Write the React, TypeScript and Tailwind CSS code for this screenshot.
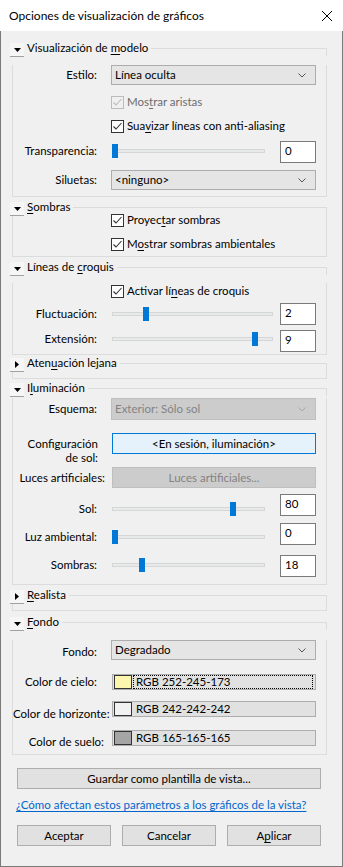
import React from "react";

const FONT = "font-['Lato',sans-serif]";

function U({ children }: { children: React.ReactNode }) {
  return <span className="underline underline-offset-[2px] decoration-[1px]">{children}</span>;
}

function Check({ disabled }: { disabled?: boolean }) {
  const c = disabled ? "#bcbcbc" : "#333333";
  return (
    <svg width="13" height="13" viewBox="0 0 13 13" className="shrink-0">
      <rect x="0.5" y="0.5" width="12" height="12" fill={disabled ? "#f0f0f0" : "#ffffff"} stroke={c} />
      <polyline points="2.5,6.5 5,9 10.5,3" fill="none" stroke={c} strokeWidth="1.1" />
    </svg>
  );
}

function CheckRow({ children, disabled, className }: { children: React.ReactNode; disabled?: boolean; className?: string }) {
  return (
    <div className={`flex items-center h-[16px] pl-[98px] ${className ?? ""}`}>
      <Check disabled={disabled} />
      <span className={`ml-[3px] leading-[16px] ${disabled ? "text-[#6d6d6d]" : "text-black"}`}>{children}</span>
    </div>
  );
}

function Chevron({ disabled }: { disabled?: boolean }) {
  return (
    <svg width="8" height="5" viewBox="0 0 8 5" className="shrink-0">
      <polyline points="0.5,0.5 4,4 7.5,0.5" fill="none" stroke={disabled ? "#a8a8a8" : "#555555"} strokeWidth="1" />
    </svg>
  );
}

function Select({ value, disabled, h = "h-[20px]" }: { value: string; disabled?: boolean; h?: string }) {
  return (
    <div
      className={`w-[205px] ${h} flex items-center justify-between pl-[3px] pr-[9px] border ${
        disabled ? "bg-[#cccccc] border-[#bfbfbf] text-[#838383]" : "bg-[#e5e5e5] border-[#adadad] text-black"
      }`}
    >
      <span className="leading-[16px]">{value}</span>
      <Chevron disabled={disabled} />
    </div>
  );
}

function Slider({ thumb, width }: { thumb: number; width: string }) {
  return (
    <div className="w-[169px] shrink-0 flex items-center">
      <div className={`relative ml-[1px] ${width} h-[4px] bg-[#e7eaea] border border-[#d6d6d6]`}>
        <div className="absolute top-[-6px] w-[6px] h-[14px] bg-[#0078d7]" style={{ left: thumb - 1 }} />
      </div>
    </div>
  );
}

function NumBox({ value }: { value: string }) {
  return (
    <div className="w-[36px] h-[22px] shrink-0 bg-white border border-[#7a7a7a] pl-[4px] leading-[18px]">{value}</div>
  );
}

function SliderRow({
  label,
  thumb,
  value,
  wide,
  className,
  shift,
}: {
  label: string;
  thumb: number;
  value: string;
  wide?: boolean;
  className?: string;
  shift?: string;
}) {
  return (
    <div className={`flex items-center h-[22px] ${className ?? ""}`}>
      <div className={`flex items-center ${shift ?? ""}`}>
        <div className="w-[98px] pr-[14px] text-right leading-[16px]">{label}</div>
        <Slider thumb={thumb} width={wide ? "w-[161px]" : "w-[153px]"} />
      </div>
      <NumBox value={value} />
    </div>
  );
}

function Triangle({ open }: { open: boolean }) {
  return open ? (
    <svg width="7" height="4" viewBox="0 0 7 4">
      <polygon points="0,0 7,0 3.5,4" fill="#000" />
    </svg>
  ) : (
    <svg width="4" height="7" viewBox="0 0 4 7">
      <polygon points="0,0 4,3.5 0,7" fill="#000" />
    </svg>
  );
}

function Group({
  title,
  open,
  className,
  bodyClass,
  children,
}: {
  title: React.ReactNode;
  open: boolean;
  className?: string;
  bodyClass?: string;
  children?: React.ReactNode;
}) {
  return (
    <div className={className}>
      <div className="flex items-start h-[16px]">
        <div className="relative z-10 w-[14px] h-[14px] mt-[3px] shrink-0 flex items-center justify-center bg-[#f6f6f6] border-b border-[#a0a0a0]">
          <Triangle open={open} />
        </div>
        <div className="ml-[3px] leading-[16px] whitespace-nowrap">{title}</div>
        <div className="flex-1 self-stretch ml-[3px] mt-[8px] border-t border-r border-[#dcdcdc]" />
      </div>
      <div className={`ml-[2px] border-l border-r border-b border-[#dcdcdc] ${bodyClass ?? ""}`}>{children}</div>
    </div>
  );
}

function Label({ children, pr = "pr-[14px]", className }: { children: React.ReactNode; pr?: string; className?: string }) {
  return <div className={`w-[98px] shrink-0 text-right leading-[16px] ${pr} ${className ?? ""}`}>{children}</div>;
}

function ColorField({ color, text, focus }: { color: string; text: string; focus?: boolean }) {
  return (
    <div className="w-[204px] h-[16px] shrink-0 flex items-center bg-[#e1e1e1] border border-[#adadad]">
      <div className={`ml-[1px] w-[18px] h-[14px] border border-[#333333] ${color}`} />
      <div
        className={`ml-[1px] mr-[2px] flex-1 h-[14px] pl-[2px] leading-[12px] border border-dotted ${
          focus ? "border-black" : "border-transparent"
        }`}
      >
        {text}
      </div>
    </div>
  );
}

function Btn({ children, className }: { children: React.ReactNode; className?: string }) {
  return (
    <div className={`h-[21px] flex items-center justify-center bg-[#e1e1e1] border border-[#adadad] leading-[16px] ${className ?? ""}`}>
      {children}
    </div>
  );
}

export default function App() {
  return (
    <div className={`w-[343px] h-[867px] flex flex-col bg-[#f0f0f0] text-[11.5px] text-black ${FONT}`}>
      {/* Title bar */}
      <div className="h-[31px] shrink-0 bg-white flex items-center justify-between pl-[9px] pr-[11px]">
        <span className="leading-[16px] text-[12px]">Opciones de visualización de gráficos</span>
        <svg width="10" height="10" viewBox="0 0 10 10">
          <line x1="0" y1="0" x2="10" y2="10" stroke="#000" strokeWidth="1" />
          <line x1="10" y1="0" x2="0" y2="10" stroke="#000" strokeWidth="1" />
        </svg>
      </div>

      {/* Body */}
      <div className="flex-1 flex flex-col border-l border-r border-b border-[#7a7a7a]">
        <div className="pt-[9px] pl-[9px] pr-[15px] flex flex-col">
          {/* Visualización de modelo */}
          <Group
            open
            title={
              <>
                Visualización de <U>m</U>odelo
              </>
            }
            bodyClass="pb-[6px]"
          >
            <div className="flex items-center h-[20px] mt-[9px]">
              <Label>Estilo:</Label>
              <Select value="Línea oculta" />
            </div>
            <CheckRow disabled className="mt-[9px]">
              Mos<U>t</U>rar aristas
            </CheckRow>
            <CheckRow className="mt-[8px]">
              Sua<U>v</U>izar líneas con anti-aliasing
            </CheckRow>
            <SliderRow label="Transparencia:" thumb={0} value="0" className="mt-[7px]" shift="mb-[3px]" />
            <div className="flex items-center h-[20px] mt-[7px]">
              <Label>Siluetas:</Label>
              <Select value="<ninguno>" />
            </div>
          </Group>

          {/* Sombras */}
          <Group
            open
            className="mt-[2px]"
            title={
              <>
                <U>S</U>ombras
              </>
            }
            bodyClass="pb-[4px]"
          >
            <CheckRow className="-mt-[3px]">
              Proyec<U>t</U>ar sombras
            </CheckRow>
            <CheckRow className="mt-[8px]">
              M<U>o</U>strar sombras ambientales
            </CheckRow>
          </Group>

          {/* Líneas de croquis */}
          <Group
            open
            className="mt-[2px]"
            title={
              <>
                Líneas de <U>c</U>roquis
              </>
            }
            bodyClass="pb-[2px]"
          >
            <CheckRow className="mt-[8px]">
              Activar lí<U>n</U>eas de croquis
            </CheckRow>
            <SliderRow label="Fluctuación:" thumb={31} value="2" wide className="mt-[4px]" />
            <SliderRow label="Extensión:" thumb={140} value="9" wide className="mt-[5px]" shift="mb-[4px]" />
          </Group>

          {/* Atenuación lejana */}
          <Group
            open={false}
            title={
              <>
                Aten<U>u</U>ación lejana
              </>
            }
            bodyClass="h-[8px]"
          />

          {/* Iluminación */}
          <Group
            open
            className="mt-[1px]"
            title={
              <>
                I<U>l</U>uminación
              </>
            }
            bodyClass="pb-[7px]"
          >
            <div className="flex items-center h-[22px] mt-[2px]">
              <Label>Esquema:</Label>
              <Select value="Exterior: Sólo sol" disabled h="h-[22px]" />
            </div>
            <div className="flex items-start mt-[13px]">
              <div className="w-[99px] shrink-0 pr-[14px] mt-[4px] text-right leading-[14px]">
                Configuración
                <br />
                de sol:
              </div>
              <div className="w-[204px] h-[21px] flex items-center justify-center bg-[#e5f1fb] border border-[#0078d7] leading-[16px]">
                &lt;En sesión, iluminación&gt;
              </div>
            </div>
            <div className="flex items-center h-[21px] mt-[2px]">
              <div className="w-[99px] shrink-0 pr-[7px] text-right leading-[16px]">Luces artificiales:</div>
              <div className="w-[204px] h-[21px] flex items-center justify-center bg-[#cccccc] border border-[#bfbfbf] text-[#838383] leading-[16px]">
                Luces artificiales...
              </div>
            </div>
            <SliderRow label="Sol:" thumb={118} value="80" className="mt-[6px]" shift="mt-[8px]" />
            <SliderRow label="Luz ambiental:" thumb={0} value="0" className="mt-[7px]" shift="mt-[6px]" />
            <SliderRow label="Sombras:" thumb={27} value="18" className="mt-[10px]" shift="mb-[3px]" />
          </Group>

          {/* Realista */}
          <Group
            open={false}
            className="mt-[2px]"
            title={
              <>
                <U>R</U>ealista
              </>
            }
            bodyClass="h-[8px]"
          />

          {/* Fondo */}
          <Group
            open
            className="mt-[3px]"
            title={
              <>
                <U>F</U>ondo
              </>
            }
            bodyClass="pb-[8px]"
          >
            <div className="flex items-center h-[20px] mt-[10px]">
              <Label className="mt-[4px]">Fondo:</Label>
              <Select value="Degradado" />
            </div>
            <div className="flex items-center h-[16px] mt-[14px]">
              <div className="w-[99px] shrink-0 pr-[15px] text-right leading-[16px]">Color de cielo:</div>
              <ColorField color="bg-[#fcf5ad]" text="RGB 252-245-173" focus />
            </div>
            <div className="flex items-center h-[16px] mt-[11px]">
              <div className="w-[99px] shrink-0 pr-[5px] mt-[10px] text-right leading-[16px] whitespace-nowrap">
                Color de horizonte:
              </div>
              <ColorField color="bg-[#f2f2f2]" text="RGB 242-242-242" />
            </div>
            <div className="flex items-center h-[16px] mt-[13px]">
              <div className="w-[99px] shrink-0 pr-[8px] mt-[8px] text-right leading-[16px]">Color de suelo:</div>
              <ColorField color="bg-[#a5a5a5]" text="RGB 165-165-165" />
            </div>
          </Group>
        </div>

        <Btn className="mt-[13px] ml-[16px] w-[304px]">Guardar como plantilla de vista...</Btn>
        <div className="mt-[8px] ml-[15px] leading-[16px] text-[#0066cc] underline underline-offset-[2px]">
          ¿Cómo afectan estos parámetros a los gráficos de la vista?
        </div>
        <div className="mt-[12px] ml-[16px] flex gap-[11px]">
          <Btn className="w-[94px]">Aceptar</Btn>
          <Btn className="w-[94px]">Cancelar</Btn>
          <Btn className="w-[94px]">
            A<U>p</U>licar
          </Btn>
        </div>
      </div>
    </div>
  );
}
